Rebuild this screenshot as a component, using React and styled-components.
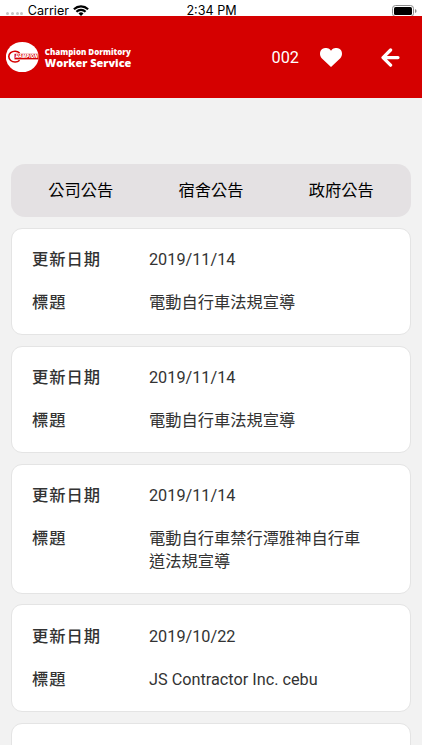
import React from "react";
import styled, { createGlobalStyle } from "styled-components";

const notices = [
  { date: "2019/11/14", title: "電動自行車法規宣導" },
  { date: "2019/11/14", title: "電動自行車法規宣導" },
  { date: "2019/11/14", title: "電動自行車禁行潭雅神自行車道法規宣導" },
  { date: "2019/10/22", title: "JS Contractor Inc. cebu" },
];

const tabs = ["公司公告", "宿舍公告", "政府公告"];

// Carrier, clock and battery
const Status = () => (
  <StatusBar>
    <Carrier>
      <Signal>
        <i />
        <i />
        <i />
        <i />
      </Signal>
      <StatusText>Carrier</StatusText>
      <svg width="16" height="11" viewBox="0 0 16 11">
        <g fill="none" stroke="#000" strokeWidth="2.2">
          <path d="M0.9 4.2 A10.4 10.4 0 0 1 15.1 4.2" />
          <path d="M3.4 6.8 A6.6 6.6 0 0 1 12.6 6.8" />
        </g>
        <path d="M8 11 L5.5 8.5 A3.6 3.6 0 0 1 10.5 8.5 Z" />
      </svg>
    </Carrier>
    <StatusText>2:34 PM</StatusText>
    <Battery width="25" height="12" viewBox="0 0 25 12">
      <rect x="0.5" y="0.5" width="21" height="11" rx="3" fill="#fff" stroke="#8c8c8c" />
      <rect x="2" y="2" width="18" height="8" rx="1.6" />
      <path d="M23 4 Q24.6 4.6 24.6 6 T23 8 Z" fill="#8c8c8c" />
    </Battery>
  </StatusBar>
);

const Logo = () => (
  <svg width="128" height="32" viewBox="0 0 128 32">
    <ellipse cx="16.2" cy="16" rx="16.4" ry="15.1" fill="#fff" />
    <path d="M13.6 12 A6.2 5.4 0 1 0 13.6 19.2" fill="none" stroke="#d50000" strokeWidth="1.6" />
    <path d="M8.5 12.8 H32.4 V18.4 H8.5 Z" fill="#d50000" />
    <LogoText x="9.5" y="17.2" fontSize="4.6" fontStyle="italic" textLength="22.5" lengthAdjust="spacingAndGlyphs">
      HAMPION
    </LogoText>
    <LogoText x="38.8" y="13.9" fontSize="7.8" textLength="86" lengthAdjust="spacingAndGlyphs">
      Champion Dormitory
    </LogoText>
    <LogoText x="38.8" y="26" fontSize="10" textLength="86.5" lengthAdjust="spacingAndGlyphs">
      Worker Service
    </LogoText>
  </svg>
);

const Notice = ({ date, title }) => (
  <Card>
    <Row>
      <Label>更新日期</Label>
      <Value>{date}</Value>
    </Row>
    <Row>
      <Label>標題</Label>
      <Value>{title}</Value>
    </Row>
  </Card>
);

const App = () => {
  return (
    <>
      <GlobalStyle />
      <Screen>
        <Status />
        <Header>
          <Logo />
          <UserCode>002</UserCode>
          <Heart width="22" height="19" viewBox="0 0 22 19">
            <path
              d="M11 19 L1.7 10.2 C-0.5 7.8 -0.5 4 1.4 1.8 C4 -0.9 8.2 -0.4 10.2 1.8 L11 2.7 L11.8 1.8 C13.8 -0.4 18 -0.9 20.6 1.8 C22.5 4 22.5 7.8 20.3 10.2 Z"
              fill="#fff"
            />
          </Heart>
          <svg width="19" height="19" viewBox="0 0 19 19">
            <path
              d="M9.6 2 L2 9.6 L9.6 17.2 M2.4 9.6 H17"
              fill="none"
              stroke="#fff"
              strokeWidth="3.2"
              strokeLinecap="round"
              strokeLinejoin="round"
            />
          </svg>
        </Header>
        <Content>
          <Tabs>
            {tabs.map((tab) => (
              <Tab key={tab}>{tab}</Tab>
            ))}
          </Tabs>
          {notices.map((notice, index) => (
            <Notice key={index} {...notice} />
          ))}
          <Card />
        </Content>
      </Screen>
    </>
  );
};

const GlobalStyle = createGlobalStyle`
  body {
    margin: 0;
    background: #fff;
    overflow: hidden;
    font-family: Roboto, "Noto Sans CJK TC", sans-serif;
  }

  * {
    box-sizing: border-box;
  }
`;

const Screen = styled.div`
  display: flex;
  flex-direction: column;
  width: 422px;
  height: 745px;
  overflow: hidden;
  background: #f2f2f2;
`;

const StatusBar = styled.div`
  display: grid;
  grid-template-columns: 1fr auto 1fr;
  align-items: center;
  flex: none;
  height: 16.4px;
  padding: 4px 5px 0 6px;
  background: #fff;
  color: #000;
  font-family: Inter, sans-serif;
  font-size: 12.6px;
  line-height: 12px;
`;

const Carrier = styled.div`
  display: flex;
  align-items: center;
  gap: 4.3px;
`;

const Signal = styled.div`
  display: flex;
  gap: 1.8px;
  margin-top: 6px;

  i {
    width: 3px;
    height: 3px;
    border-radius: 50%;
    background: #c4c4c4;
  }
`;

const StatusText = styled.span`
  padding-top: 1px;
`;

const Battery = styled.svg`
  justify-self: end;
`;

const Header = styled.header`
  display: flex;
  align-items: center;
  flex: none;
  height: 81.4px;
  padding: 0 22px 0 6px;
  background: #d50000;
`;

const LogoText = styled.text`
  fill: #fff;
  font-family: "Open Sans", "Noto Sans", sans-serif;
  font-weight: 800;
`;

const UserCode = styled.span`
  margin-left: auto;
  color: #fff;
  font-size: 16.3px;
`;

const Heart = styled.svg`
  margin: 1px 39px 0 21px;
`;

const Content = styled.main`
  display: flex;
  flex-direction: column;
  gap: 10.8px;
  padding: 66.5px 10.8px 0;
`;

const Tabs = styled.nav`
  display: flex;
  align-items: center;
  flex: none;
  height: 52.6px;
  padding: 0 5px;
  border-radius: 14px;
  background: #e4e1e3;
`;

const Tab = styled.div`
  flex: 1;
  color: #000;
  font-size: 16.25px;
  line-height: 24px;
  text-align: center;
`;

const Card = styled.section`
  display: flex;
  flex-direction: column;
  flex: none;
  gap: 20.4px;
  min-height: 107.4px;
  padding: 20.3px 40px 19.3px 20.2px;
  border: 1px solid #e4e4e4;
  border-radius: 11px;
  background: #fff;
`;

const Row = styled.div`
  display: flex;
  color: #333;
  font-size: 16.25px;
  line-height: 22.5px;
`;

const Label = styled.div`
  flex: none;
  width: 117px;
  font-weight: 500;
  letter-spacing: 1px;
`;

const Value = styled.div`
  flex: 1;
`;

export default App;
